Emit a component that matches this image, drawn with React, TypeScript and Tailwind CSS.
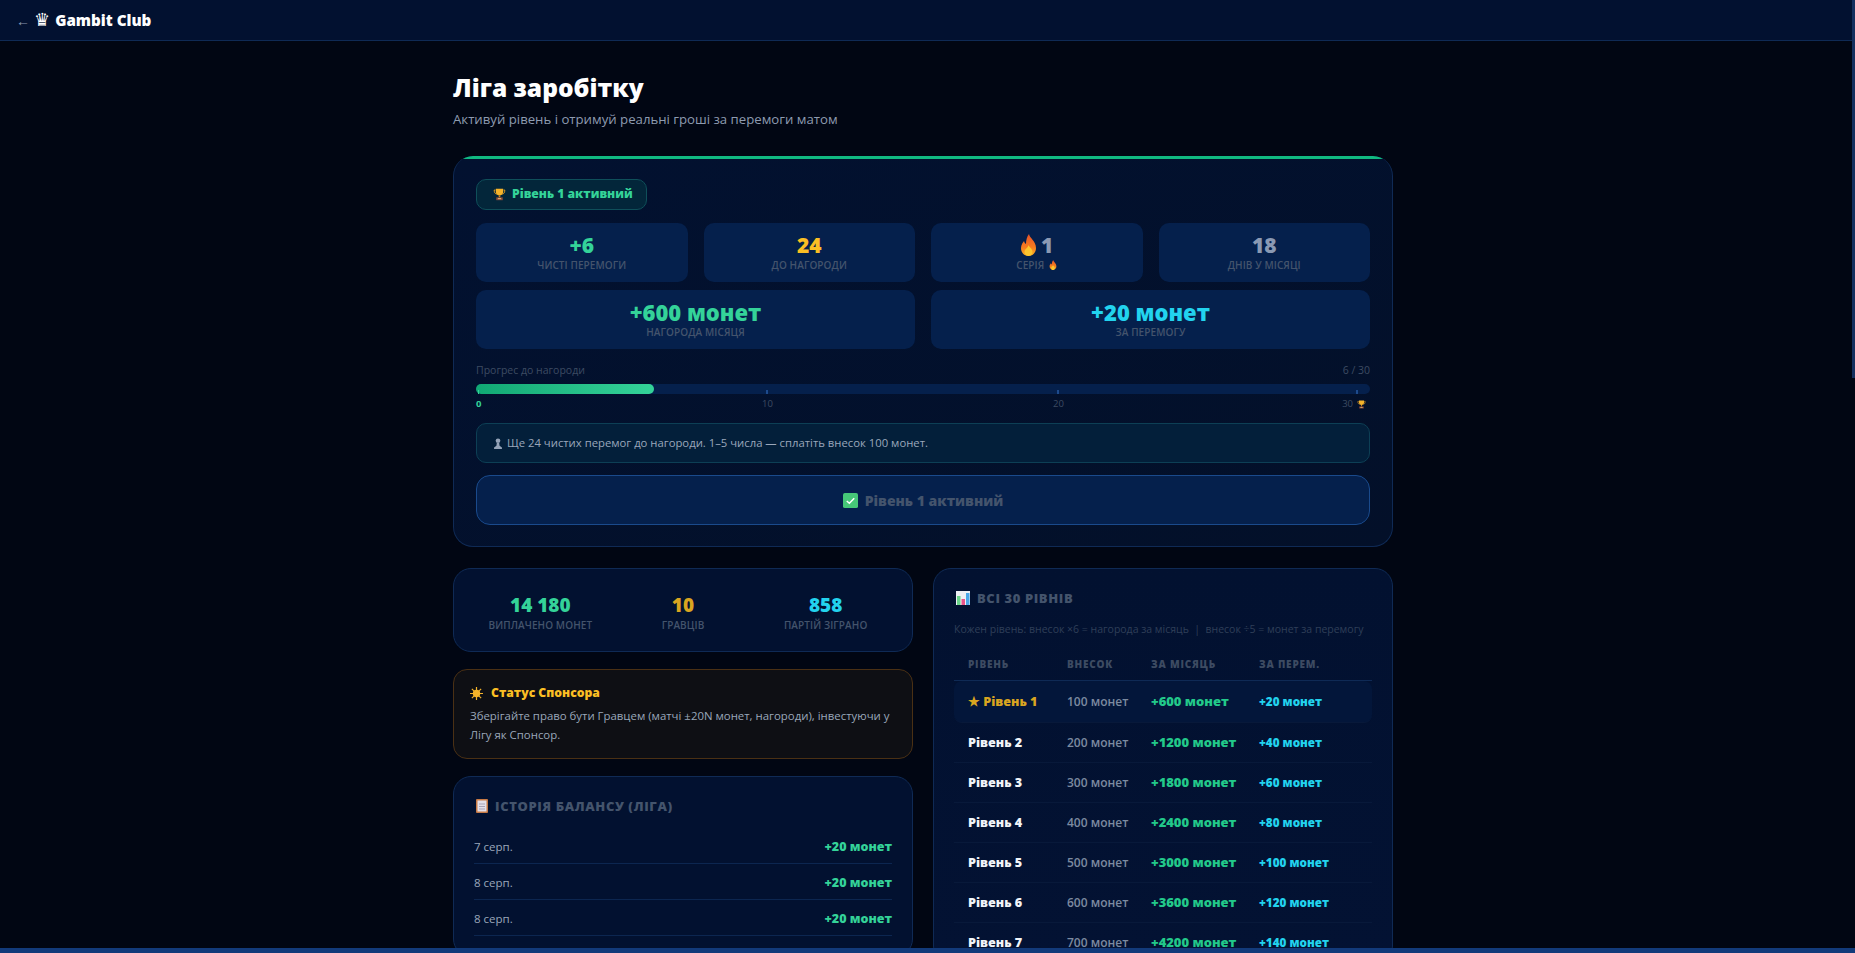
const FONT = "font-['Open_Sans',_'Noto_Sans',_sans-serif]";

function Trophy({ className }: { className: string }) {
  return (
    <svg viewBox="0 0 16 16" className={className} aria-hidden="true">
      <path d="M3 2.500H1.500c0 3 1 4.500 3 5M13 2.500h1.500c0 3-1 4.500-3 5" fill="none" stroke="#e8a020" strokeWidth="1.200" />
      <path d="M3.500 1h9v3.500c0 3-2 4.500-4.500 4.500S3.500 7.500 3.500 4.500z" fill="#f5b32a" />
      <rect x="7" y="9" width="2" height="2.500" fill="#d48a1c" />
      <rect x="4" y="11.500" width="8" height="3.500" fill="#8a4a3a" />
      <rect x="6" y="12.500" width="4" height="1.200" fill="#e8c070" />
    </svg>
  );
}

function Flame({ className }: { className: string }) {
  return (
    <svg viewBox="0 0 16 22" className={className} aria-hidden="true">
      <defs>
        <linearGradient id="flame" x1="0" y1="0" x2="0" y2="1">
          <stop offset="0" stopColor="#e8532a" />
          <stop offset="0.6" stopColor="#f57c1f" />
          <stop offset="1" stopColor="#fbb124" />
        </linearGradient>
      </defs>
      <path d="M8.500 0C9 4 15.500 7 15.500 14c0 4.500-3.300 8-7.500 8S.5 18.500.5 14c0-3.500 2-5.500 3-7 .5 1.500 1 2.500 2 3C5.500 6 6.500 2.500 8.500 0z" fill="url(#flame)" />
      <path d="M8 11c.5 2 4 3.500 4 7 0 2.300-1.800 4-4 4s-4-1.700-4-4c0-3 3.500-4 4-7z" fill="#fcc52e" />
    </svg>
  );
}

function StatCard({ value, label, color, big, icon }: { value: string; label: React.ReactNode; color: string; big?: boolean; icon?: React.ReactNode }) {
  return (
    <div className="h-[59px] rounded-[10px] bg-[#05204c] flex flex-col items-center pt-[10px]">
      <div className={`flex items-center gap-[4px] font-extrabold leading-[24px] ${big ? "text-[22px]" : "text-[21px]"} ${color}`}>
        {icon}
        {value}
      </div>
      <div className="flex items-center gap-[5px] text-[10px] leading-[14px] mt-[1px] font-semibold tracking-[0.1px] text-[#44546c] uppercase">
        {label}
      </div>
    </div>
  );
}

const HISTORY = ["7 серп.", "8 серп.", "8 серп."];
const LEVELS = [1, 2, 3, 4, 5, 6, 7];

function ProgressBlock() {
  return (
    <div className="mt-[14px]">
      <div className="flex justify-between text-[10.5px] leading-[15px] text-[#3d4b62]">
        <span>Прогрес до нагороди</span>
        <span>6 / 30</span>
      </div>
      <div className="relative mt-[6px] h-[10px] rounded-[5px] bg-[#05204c]">
        <div className="h-full w-[178px] rounded-[5px] bg-gradient-to-r from-[#10a874] to-[#34d399]" />
        <span className="absolute bottom-0 left-[2px] h-[4px] w-[1px] bg-[#34d399]" />
        <span className="absolute bottom-0 left-[290px] h-[4px] w-[2px] bg-[#1d4a8c]" />
        <span className="absolute bottom-0 left-[581px] h-[4px] w-[2px] bg-[#1d4a8c]" />
        <span className="absolute bottom-0 left-[880px] h-[4px] w-[2px] bg-[#1d4a8c]" />
      </div>
      <div className="relative mt-[3px] h-[14px] text-[9.5px] leading-[14px] text-[#3d4b62]">
        <span className="absolute left-0 font-bold text-[#34d399]">0</span>
        <span className="absolute left-[286px]">10</span>
        <span className="absolute left-[577px]">20</span>
        <span className="absolute right-[4px] flex items-center gap-[4px]">
          30 <Trophy className="w-[9px] h-[9px]" />
        </span>
      </div>
    </div>
  );
}

function ActivePanel() {
  return (
    <section className="relative overflow-hidden rounded-[20px] border border-t-0 border-[#0f2a55] bg-gradient-to-br from-[#021130] to-[#031029] px-[22px] pt-[23px] pb-[21px]">
      <div className="absolute inset-x-0 top-0 h-[3px] bg-[#10b981]" />
      <div className="inline-flex items-center gap-[6px] h-[31px] w-[171px] pl-[16px] rounded-[10px] border border-[#0f4f5a] bg-[#03263a] text-[12.2px] font-extrabold text-[#34d399]">
        <Trophy className="w-[13px] h-[13px]" />
        Рівень 1 активний
      </div>
      <div className="mt-[13px] grid grid-cols-4 gap-x-[16px]">
        <StatCard value="+6" label="Чисті перемоги" color="text-[#34d399]" />
        <StatCard value="24" label="До нагороди" color="text-[#fbbf24]" />
        <StatCard
          value="1"
          label={<>Серія <Flame className="w-[8px] h-[10px]" /></>}
          color="text-[#8a99b3]"
          icon={<Flame className="w-[17px] h-[22px]" />}
        />
        <StatCard value="18" label="Днів у місяці" color="text-[#8a99b3]" />
      </div>
      <div className="mt-[8px] grid grid-cols-2 gap-x-[16px]">
        <StatCard big value="+600 монет" label="Нагорода місяця" color="text-[#34d399]" />
        <StatCard big value="+20 монет" label="За перемогу" color="text-[#22d3ee]" />
      </div>
      <ProgressBlock />
      <div className="mt-[12px] h-[40px] rounded-[10px] border border-[#0d3f55] bg-[#031f3a] flex items-center pl-[16px] gap-[4px] text-[11.3px] text-[#9aa7ba]">
        <svg viewBox="0 0 12 14" className="w-[10px] h-[11px]" aria-hidden="true">
          <circle cx="6" cy="3.500" r="3" fill="#94a3b8" />
          <path d="M4.500 6.500h3L8 10l3 2v2H1v-2l3-2z" fill="#94a3b8" />
        </svg>
        Ще 24 чистих перемог до нагороди. 1–5 числа — сплатіть внесок 100 монет.
      </div>
      <button className="mt-[12px] w-full h-[50px] rounded-[14px] border border-[#1a4a8c] bg-[#05204c] flex items-center justify-center gap-[7px] text-[14px] font-extrabold text-[#44546c]">
        <svg viewBox="0 0 16 16" className="w-[15px] h-[15px]" aria-hidden="true">
          <rect width="16" height="16" rx="2" fill="#46c878" />
          <path d="M4 8.500l2.800 2.500L12 5.500" fill="none" stroke="#fff" strokeWidth="1.600" />
        </svg>
        Рівень 1 активний
      </button>
    </section>
  );
}

function TotalsCard() {
  const items = [
    { value: "14 180", label: "Виплачено монет", color: "text-[#34d399]" },
    { value: "10", label: "Гравців", color: "text-[#d9a520]" },
    { value: "858", label: "Партій зіграно", color: "text-[#22d3ee]" },
  ];
  return (
    <div className="h-[84px] rounded-[18px] border border-[#0f2a55] bg-[#021130] grid grid-cols-3 px-[15px]">
      {items.map((it, i) => (
        <div key={i} className="flex flex-col items-center pt-[24px]">
          <div className={`text-[19px] leading-[24px] font-extrabold ${it.color}`}>{it.value}</div>
          <div className="text-[10px] leading-[14px] mt-[1px] font-semibold tracking-[0.1px] uppercase text-[#44546c]">{it.label}</div>
        </div>
      ))}
    </div>
  );
}

function SponsorCard() {
  return (
    <div className="mt-[17px] h-[90px] rounded-[14px] border border-[#4a3014] bg-[#0e0f14] px-[16px] pt-[14px]">
      <div className="flex items-center gap-[8px] text-[12.2px] leading-[18px] font-extrabold text-[#fbbf24]">
        <svg viewBox="0 0 14 14" className="w-[13px] h-[13px]" aria-hidden="true">
          <circle cx="7" cy="7" r="4" fill="#f5b32a" />
          <path d="M7 0v14M0 7h14M2 2l10 10M12 2L2 12" stroke="#f5b32a" strokeWidth="1.300" />
        </svg>
        Статус Спонсора
      </div>
      <p className="mt-[4px] text-[11.4px] leading-[19px] text-[#9aa7ba]">
        Зберігайте право бути Гравцем (матчі ±20N монет, нагороди), інвестуючи у Лігу як Спонсор.
      </p>
    </div>
  );
}

function HistoryCard() {
  return (
    <div className="mt-[17px] rounded-[18px] border border-[#0f2a55] bg-[#021130] px-[20px] pt-[20px] pb-[20px]">
      <h3 className="flex items-center gap-[7px] text-[13px] leading-[18px] font-extrabold tracking-[0.6px] uppercase text-[#44546c]">
        <svg viewBox="0 0 12 14" className="w-[12px] h-[14px] ml-[2px]" aria-hidden="true">
          <rect width="12" height="14" rx="1" fill="#c87a45" />
          <rect x="1.500" y="1.500" width="9" height="11" fill="#e4e0ea" />
          <path d="M3 5h6M3 7.500h6M3 10h6" stroke="#a9a4b8" />
        </svg>
        Історія балансу (Ліга)
      </h3>
      <div className="mt-[13px]">
        {HISTORY.map((d, i) => (
          <div key={i} className="h-[36px] flex items-center justify-between border-b border-[#0c2650] pt-[3px]">
            <span className="text-[11.5px] text-[#9aa7ba]">{d}</span>
            <span className="text-[12.5px] font-extrabold text-[#34d399]">+20 монет</span>
          </div>
        ))}
      </div>
    </div>
  );
}

function LevelsCard() {
  return (
    <div className="rounded-[18px] border border-[#0f2a55] bg-gradient-to-b from-[#021130] to-[#031233] px-[20px] pt-[20px]">
      <h3 className="flex items-center gap-[7px] text-[13px] leading-[18px] font-extrabold tracking-[0.6px] uppercase text-[#44546c]">
        <svg viewBox="0 0 14 14" className="w-[14px] h-[14px] ml-[2px]" aria-hidden="true">
          <rect width="14" height="14" fill="#eef0f4" />
          <rect x="1" y="5" width="3.500" height="9" fill="#6bd58a" />
          <rect x="5.500" y="8" width="3.500" height="6" fill="#e8548a" />
          <rect x="10" y="2" width="3.500" height="12" fill="#4aa8e8" />
        </svg>
        Всі 30 рівнів
      </h3>
      <p className="mt-[15px] text-[10.5px] leading-[15px] text-[#2f3f58]">
        Кожен рівень: внесок ×6 = нагорода за місяць &nbsp;|&nbsp; внесок ÷5 = монет за перемогу
      </p>
      <div className="mt-[20px] grid grid-cols-[99px_84px_108px_1fr] border-b border-[#0f2a55] h-[24px] pl-[14px] text-[10px] font-extrabold tracking-[0.8px] uppercase text-[#3d4b62]">
        <span>Рівень</span>
        <span>Внесок</span>
        <span>За місяць</span>
        <span>За перем.</span>
      </div>
      {LEVELS.map((n) => {
        const first = n === 1;
        return (
          <div
            key={n}
            className={`grid grid-cols-[99px_84px_108px_1fr] items-center pl-[14px] pt-[1px] border-b border-[#08193a] ${first ? "h-[42px] bg-[#03163a] rounded-[8px]" : "h-[40px]"}`}
          >
            <span className={`text-[12.6px] font-extrabold ${first ? "text-[#d9a520]" : "text-[#f1f5f9]"}`}>
              {first ? "★ " : ""}Рівень {n}
            </span>
            <span className="text-[12px] font-semibold text-[#7c8aa0]">{n * 100} монет</span>
            <span className="text-[13px] font-extrabold text-[#22c98a]">+{n * 600} монет</span>
            <span className="text-[11.7px] font-extrabold text-[#22d3ee]">+{n * 20} монет</span>
          </div>
        );
      })}
    </div>
  );
}

export default function App() {
  return (
    <div className={`h-screen flex flex-col overflow-hidden bg-[#010613] ${FONT}`}>
      <div className="flex-1 min-h-0 flex">
        <div className="flex-1 min-w-0 overflow-hidden">
          <header className="h-[41px] border-b border-[#0f2a55] bg-[#021130] flex items-center pl-[16px] gap-[4px]">
            <span className="text-[14px] text-[#8e9bb0]">←</span>
            <span className="text-[15.2px] font-extrabold text-white flex items-center gap-[5px]">
              <span className="font-['DejaVu_Sans'] text-[18px] leading-[20px]">♛</span> Gambit Club
            </span>
          </header>
          <main className="w-[940px] pt-[29px] ml-[453px]">
            <h1 className="text-[24.5px] leading-[36px] font-extrabold text-white">Ліга заробітку</h1>
            <p className="mt-[4px] text-[13.2px] leading-[18px] text-[#8e9bb0]">Активуй рівень і отримуй реальні гроші за перемоги матом</p>
            <div className="mt-[28px]">
              <ActivePanel />
            </div>
            <div className="mt-[21px] grid grid-cols-2 gap-[20px]">
              <div>
                <TotalsCard />
                <SponsorCard />
                <HistoryCard />
              </div>
              <LevelsCard />
            </div>
          </main>
        </div>
        <div className="w-[3px] bg-[#010613]">
          <div className="h-[378px] bg-[#14305f]" />
        </div>
      </div>
      <div className="h-[5px] shrink-0 bg-[#123a7a]" />
    </div>
  );
}
